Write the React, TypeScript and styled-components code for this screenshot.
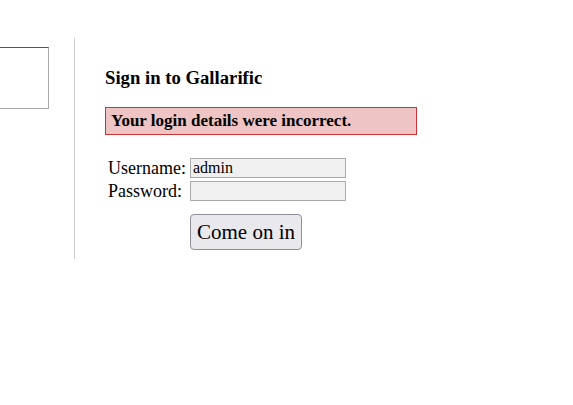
import React from "react";
import styled, { createGlobalStyle } from "styled-components";

const Global = createGlobalStyle`
  html, body { margin: 0; padding: 0; background: #fff; }
  body { font-family: "Liberation Serif", "DejaVu Serif", serif; color: #000; }
`;

const Page = styled.div`
  display: flex;
  align-items: flex-start;
  padding-top: 38px;
`;

const Sidebar = styled.aside`
  width: 74px;
  padding-top: 9px;
`;

const SideBox = styled.div`
  width: 48px;
  height: 60px;
  border-top: 1px solid #555;
  border-right: 1px solid #aaa;
  border-bottom: 1px solid #aaa;
`;

const Main = styled.main`
  border-left: 1px solid #ccc;
  height: 221px;
  padding-left: 30px;
  box-sizing: border-box;
`;

const Title = styled.h2`
  font-size: 18.7px;
  font-weight: bold;
  margin: 30px 0 0 0;
  line-height: 20px;
`;

const ErrorBox = styled.div`
  margin-top: 19px;
  width: 312px;
  height: 28px;
  box-sizing: border-box;
  border: 1px solid #c33;
  background: #eec4c4;
  font-weight: bold;
  font-size: 17px;
  padding: 0 5px;
  display: flex;
  align-items: center;
`;

const Form = styled.form`
  margin-top: 23px;
  display: grid;
  grid-template-columns: 82px 156px;
  row-gap: 3px;
  padding-left: 3px;
`;

const Label = styled.label`
  font-size: 18px;
  line-height: 20px;
  white-space: nowrap;
`;

const Input = styled.input`
  width: 156px;
  height: 20px;
  box-sizing: border-box;
  margin: 0;
  border: 1px solid #aaa;
  background: #f0f0f0;
  font-family: "Liberation Serif", "DejaVu Serif", serif;
  font-size: 16px;
  padding: 0 2px;
  outline: none;
`;

const Button = styled.button`
  grid-column: 2;
  justify-self: start;
  margin-top: 10px;
  height: 36px;
  padding: 0 6px;
  font-family: "Liberation Serif", "DejaVu Serif", serif;
  font-size: 21px;
  color: #000;
  background: #e9e9ed;
  border: 1px solid #8f8f9d;
  border-radius: 4px;
`;

export default function App() {
  return (
    <>
      <Global />
      <Page>
        <Sidebar>
          <SideBox />
        </Sidebar>
        <Main>
          <Title>Sign in to Gallarific</Title>
          <ErrorBox>Your login details were incorrect.</ErrorBox>
          <Form onSubmit={(e) => e.preventDefault()}>
            <Label htmlFor="u">Username:</Label>
            <Input id="u" type="text" defaultValue="admin" />
            <Label htmlFor="p">Password:</Label>
            <Input id="p" type="password" />
            <Button type="submit">Come on in</Button>
          </Form>
        </Main>
      </Page>
    </>
  );
}
